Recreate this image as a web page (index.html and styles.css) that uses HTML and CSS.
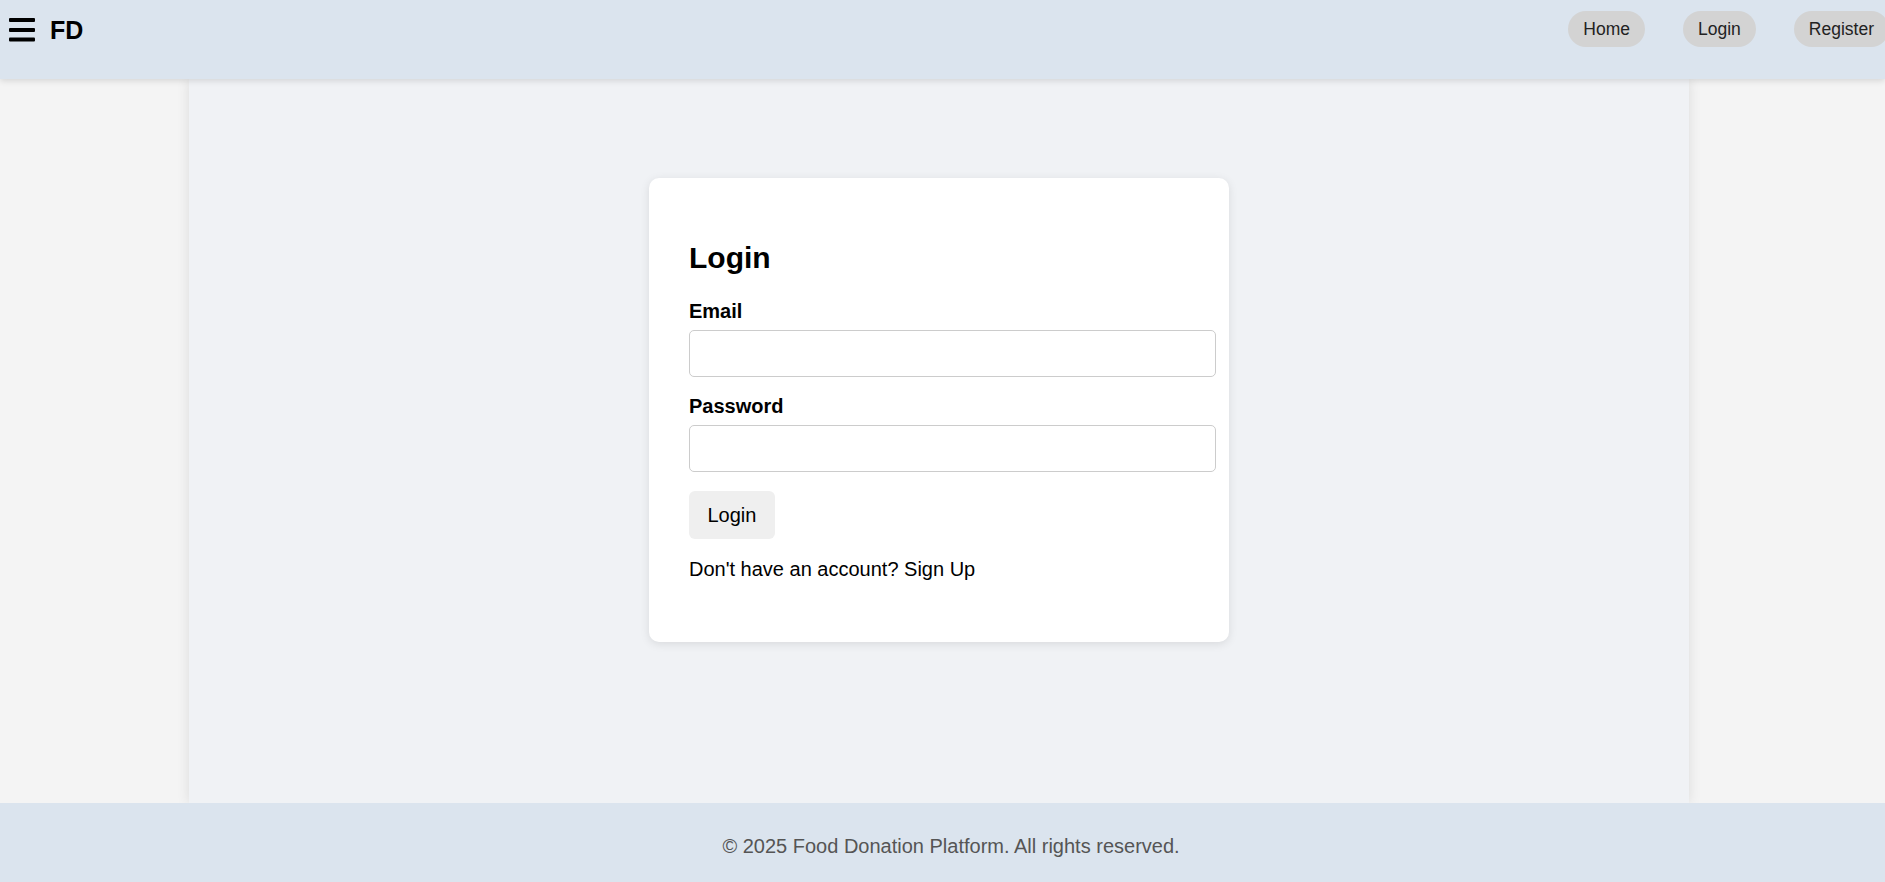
FILE: index.html
```html
<!DOCTYPE html>
<html lang="en">
<head>
<meta charset="utf-8">
<title>Login - Food Donation Platform</title>
<link rel="stylesheet" href="styles.css">
</head>
<body>
<header class="site-header">
  <div class="brand">
    <svg class="menu-icon" width="26" height="24" viewBox="0 0 26 24" aria-hidden="true">
      <rect x="0" y="0" width="26" height="4" rx="1"/>
      <rect x="0" y="10" width="26" height="4" rx="1"/>
      <rect x="0" y="19.5" width="26" height="4" rx="1"/>
    </svg>
    <span class="logo">FD</span>
  </div>
  <nav class="nav">
    <a class="nav-link" href="#">Home</a>
    <a class="nav-link" href="#">Login</a>
    <a class="nav-link" href="#">Register</a>
  </nav>
</header>
<main class="page">
  <div class="container">
    <div class="card">
      <h2 class="card-title">Login</h2>
      <form class="form">
        <label class="label" for="email">Email</label>
        <input class="input" id="email" type="email">
        <label class="label" for="password">Password</label>
        <input class="input" id="password" type="password">
        <button class="btn" type="button">Login</button>
      </form>
      <p class="switch">Don't have an account? <a class="switch-link" href="#">Sign Up</a></p>
    </div>
  </div>
</main>
<footer class="site-footer">
  <p class="copy">© 2025 Food Donation Platform. All rights reserved.</p>
</footer>
</body>
</html>
```

FILE: styles.css
```css
html, body {
  margin: 0;
  padding: 0;
}
body {
  font-family: "Liberation Sans", Arial, sans-serif;
  font-size: 20px;
  color: #000;
  background: #f4f4f4;
  min-height: 100vh;
  display: flex;
  flex-direction: column;
  overflow: hidden;
}
.site-header {
  height: 79px;
  box-sizing: border-box;
  padding: 11px 0 0 9px;
  background: #dbe4ee;
  display: flex;
  justify-content: space-between;
  align-items: flex-start;
  box-shadow: 0 2px 6px rgba(0, 0, 0, 0.12);
  position: relative;
  z-index: 2;
  overflow: hidden;
  flex-shrink: 0;
}
.brand {
  display: flex;
  align-items: center;
  height: 36px;
  gap: 15px;
}
.menu-icon {
  fill: #000;
  display: block;
  margin-top: 1px;
}
.logo {
  font-weight: bold;
  font-size: 25px;
  line-height: 28px;
  margin-top: 1px;
}
.nav {
  display: flex;
  gap: 38px;
  margin-right: -4px;
}
.nav-link {
  display: block;
  background: #d3d3d3;
  color: #222;
  text-decoration: none;
  font-size: 17.5px;
  line-height: 20px;
  padding: 8px 15px;
  border-radius: 18px;
  white-space: nowrap;
}
.page {
  flex: 1;
  display: flex;
  justify-content: center;
  padding-right: 7px;
}
.container {
  width: 1500px;
  background: #f0f2f5;
  box-shadow: 0 0 12px rgba(0, 0, 0, 0.1);
  display: flex;
  justify-content: center;
  align-items: flex-start;
  padding-top: 99px;
  box-sizing: border-box;
}
.card {
  width: 580px;
  box-sizing: border-box;
  padding: 40px;
  background: #fff;
  border-radius: 10px;
  box-shadow: 0 2px 10px rgba(0, 0, 0, 0.1);
}
.card-title {
  font-size: 30px;
  line-height: 34px;
  margin: 23px 0 25px;
}
.form {
  display: flex;
  flex-direction: column;
  align-items: flex-start;
}
.label {
  display: block;
  font-weight: bold;
  font-size: 20px;
  line-height: 23px;
  margin-bottom: 7px;
}
.input {
  height: 47px;
  box-sizing: border-box;
  width: 527px;
  padding: 12px;
  border: 1px solid #ccc;
  border-radius: 5px;
  font-family: inherit;
  font-size: 16px;
  margin: 0 0 18px;
  background: #fff;
}
.btn {
  margin-top: 1px;
  height: 48px;
  padding: 0 18.5px;
  border: none;
  border-radius: 6px;
  background: #efefef;
  font-family: inherit;
  font-size: 20px;
  color: #000;
}
.switch {
  margin: 18.5px 0 21px;
  font-size: 20px;
  line-height: 23px;
}
.switch-link {
  color: #000;
  text-decoration: none;
}
.site-footer {
  height: 79px;
  box-sizing: border-box;
  background: #dbe4ee;
  text-align: center;
  padding: 32px 0 0 17px;
  flex-shrink: 0;
}
.copy {
  margin: 0;
  font-size: 20px;
  line-height: 23px;
  color: #555;
}
```
